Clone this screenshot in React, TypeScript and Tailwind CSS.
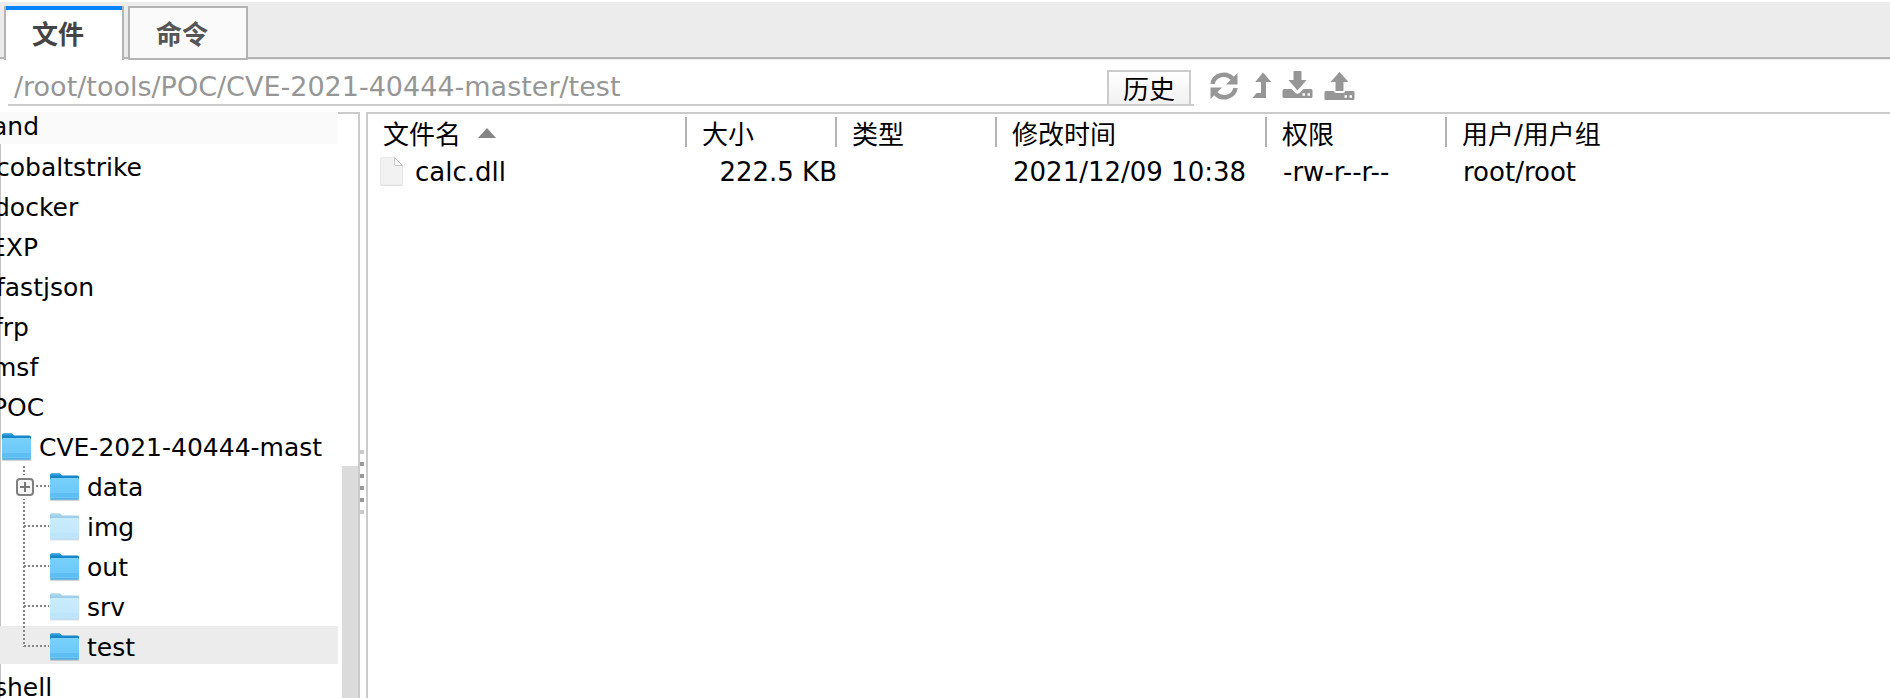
import React from 'react';
import clsx from 'clsx';

interface TreeNode {
    name: string;
    // 'clipped' rows are scrolled partly out of view on the left
    kind: 'clipped' | 'parent' | 'child';
    pull?: string;
    faded?: boolean;
    expandable?: boolean;
    selected?: boolean;
    last?: boolean;
}

const nodes: TreeNode[] = [
    { name: 'cobaltstrike', kind: 'clipped', pull: '-ml-1' },
    { name: 'docker', kind: 'clipped', pull: '-ml-1.5' },
    { name: 'EXP', kind: 'clipped', pull: '-ml-2.5' },
    { name: 'fastjson', kind: 'clipped', pull: '-ml-1' },
    { name: 'frp', kind: 'clipped', pull: '-ml-1.5' },
    { name: 'msf', kind: 'clipped', pull: '-ml-2' },
    { name: 'POC', kind: 'clipped', pull: '-ml-2' },
    { name: 'CVE-2021-40444-mast', kind: 'parent' },
    { name: 'data', kind: 'child', expandable: true },
    { name: 'img', kind: 'child', faded: true },
    { name: 'out', kind: 'child' },
    { name: 'srv', kind: 'child', faded: true },
    { name: 'test', kind: 'child', selected: true, last: true },
    { name: 'shell', kind: 'clipped', pull: '-ml-1.5' },
];

function FolderIcon({ faded }: { faded?: boolean }) {
    return (
        <svg width="30" height="28" viewBox="0 0 30 28" className={clsx('mt-1 shrink-0', faded && 'opacity-40')}>
            <defs>
                <linearGradient id="folderFront" x1="0" y1="0" x2="0" y2="1">
                    <stop offset="0" stopColor="#78d0fb" />
                    <stop offset="1" stopColor="#6ac6f8" />
                </linearGradient>
            </defs>
            <path d="M1 26.5h29v1.2H1z" fill="#8d9aa3" opacity="0.6" />
            <path d="M1 2q0-1.500 1.500-1.500h7.500q1 0 2 1l1.200 1h15.300q1.500 0 1.500 1.500V8H1z" fill="#1586c8" />
            <path d="M1 2q0-1.500 1.500-1.500h7.500q1 0 2 1l1.200 1H1z" fill="#2f9fd9" />
            <path d="M1 6.500q0-1.500 1.500-1.500h26q1.500 0 1.500 1.500V25q0 1.500-1.500 1.500h-26Q1 26.500 1 25z" fill="url(#folderFront)" />
            <path d="M1 21h29M1 23h29" stroke="#4dafe8" strokeWidth="0.8" />
            <path d="M1.500 26h28" stroke="#3f9bd4" />
        </svg>
    );
}

function FileIcon() {
    return (
        <svg width="26" height="32" viewBox="0 0 26 32" className="shrink-0">
            <path d="M3 2h13l8 8v18q0 2-2 2H3q-2 0-2-2V4q0-2 2-2z" fill="#c9c9c9" opacity="0.6" />
            <path d="M3 1.500h12l8.500 8.500v17q0 2-2 2H3.500q-2 0-2-2V3.500q0-2 1.500-2z" fill="#f2f2f2" stroke="#e2e2e2" strokeWidth="0.8" />
            <path d="M15.500 1.500v6.500q0 1.500 1.500 1.500h6.500z" fill="#fff" stroke="#bdbdbd" strokeWidth="0.9" />
        </svg>
    );
}

function Connector({ expandable, last }: { expandable?: boolean; last?: boolean }) {
    return (
        <svg width="49" height="40" viewBox="0 0 49 40" className="shrink-0">
            <path d={last ? 'M24 0v21' : 'M24 0v40'} stroke="#858585" strokeWidth="2" strokeDasharray="2 2" />
            <path d="M24 20h25" stroke="#858585" strokeWidth="2" strokeDasharray="2 2" />
            {expandable && (
                <>
                    <rect x="15" y="9" width="20" height="24" fill="#fff" />
                    <rect x="17" y="13" width="16" height="16" rx="3" fill="#f6f6f6" stroke="#808080" strokeWidth="2" />
                    <path d="M20 21h10M25 16v10" stroke="#777" strokeWidth="2" />
                </>
            )}
        </svg>
    );
}

function TreeRow({ node }: { node: TreeNode }) {
    return (
        <li className={clsx('mb-0.5 flex h-[38px] items-center whitespace-nowrap', node.selected && 'bg-[#ececec]')}>
            {node.kind === 'parent' && <span className="w-px shrink-0" />}
            {node.kind === 'child' && (
                <span className="-mb-0.5 shrink-0">
                    <Connector expandable={node.expandable} last={node.last} />
                </span>
            )}
            {node.kind !== 'clipped' && <FolderIcon faded={node.faded} />}
            <span className={clsx('mt-1.5', node.kind === 'clipped' ? node.pull : 'ml-2')}>{node.name}</span>
        </li>
    );
}

function Toolbar() {
    return (
        <div className="flex items-start text-[#969696]">
            <button aria-label="刷新" className="mt-0.5 ml-4">
                <svg width="28" height="28" viewBox="0 0 28 28" fill="none">
                    <path d="M2.500 12A11.500 11 0 0 1 22.500 6.500" stroke="currentColor" strokeWidth="4.500" />
                    <path d="M27.500 1v11.500H16z" fill="currentColor" />
                    <path d="M25.500 16A11.500 11 0 0 1 5.500 21.500" stroke="currentColor" strokeWidth="4.500" />
                    <path d="M0.500 27V15.500H12z" fill="currentColor" />
                </svg>
            </button>
            <button aria-label="上级目录" className="mt-0.5 ml-3.5">
                <svg width="20" height="28" viewBox="0 0 20 28" fill="currentColor">
                    <path d="M11 0.500 19.300 10H14v16H0.500l4-5H9V10H3.200z" />
                </svg>
            </button>
            <button aria-label="下载" className="ml-2.5">
                <svg width="31" height="30" viewBox="0 0 31 30" fill="currentColor">
                    <path d="M12 1h7q.5 0 .5.500V10h5L15.500 20.500 6.500 10h5V1.500q0-.5.500-.500z" />
                    <path
                        fillRule="evenodd"
                        d="M2 19h7.500l4 4q2 1.500 4 0l4-4H29q1.500 0 1.500 1.500v6q0 1.500-1.500 1.500H2Q.5 28 .5 26.500v-6Q.5 19 2 19zM20.500 23.200v2.500H23v-2.500zM25.500 23.200v2.500H28v-2.500z"
                    />
                </svg>
            </button>
            <button aria-label="上传" className="mt-0.5 ml-[11px]">
                <svg width="31" height="30" viewBox="0 0 31 30" fill="currentColor">
                    <path d="M15.500 0 24.500 10h-5v8.500q0 .5-.5.500h-7q-.5 0-.5-.500V10h-5z" />
                    <path
                        fillRule="evenodd"
                        d="M2 19h8q0 2 2 2h7q2 0 2-2h8q1.500 0 1.500 1.500v6q0 1.500-1.500 1.500H2Q.5 28 .5 26.500v-6Q.5 19 2 19zM20.500 23.200v2.500H23v-2.500zM25.500 23.200v2.500H28v-2.500z"
                    />
                </svg>
            </button>
        </div>
    );
}

const columns = [
    { label: '文件名', width: 'w-[319px]', sorted: true },
    { label: '大小', width: 'w-[150px]' },
    { label: '类型', width: 'w-[160px]' },
    { label: '修改时间', width: 'w-[270px]' },
    { label: '权限', width: 'w-[180px]' },
    { label: '用户/用户组', width: 'w-auto' },
];

export default function App() {
    return (
        <div className="flex h-screen flex-col overflow-hidden bg-white font-['DejaVu_Sans','Noto_Sans_CJK_SC',sans-serif] text-[26px] leading-8 text-black">
            {/* Tabs */}
            <div role="tablist" className="mt-0.5 flex h-[58px] shrink-0 items-stretch gap-1 border-b border-[#eee] bg-[#ececec] pt-1 font-bold shadow-[inset_0_-2px_0_#b4b4b4]">
                <button role="tab" aria-selected="true" className="-mb-px ml-1 w-[120px] border-x-2 border-[#b4b4b4] bg-white pt-1 pr-3 shadow-[inset_0_4px_0_#0a84ff] text-[#444]">
                    文件
                </button>
                <button role="tab" aria-selected="false" className="-mb-px w-[120px] border-2 border-[#b4b4b4] bg-[#fafafa] pt-1 pr-3 text-[#555]">
                    命令
                </button>
            </div>

            {/* Path bar */}
            <div className="flex h-[52px] shrink-0 items-start pt-2.5">
                <div className="ml-2 flex h-9 w-[1186px] items-stretch border-b-2 border-[#cbcbcb]">
                    <input
                        aria-label="路径"
                        defaultValue="/root/tools/POC/CVE-2021-40444-master/test"
                        className="min-w-0 flex-1 bg-transparent pl-1.5 text-[27px] text-[#969696] outline-none"
                    />
                    <button className="mr-[3px] w-[84px] border-2 border-b-0 border-[#cbcbcb] bg-linear-to-b from-white to-[#f1f1f1] pt-0.5">历史</button>
                </div>
                <Toolbar />
            </div>

            <div className="flex min-h-0 flex-1">
                {/* Directory tree */}
                <aside className="flex w-[360px] shrink-0 border-r-2 border-[#cbcbcb] text-[25px]">
                    <ul className="w-[338px] overflow-hidden bg-linear-to-r from-[#c4c4c4] from-[1px] to-white to-[1px]">
                        <li className="mb-0.5 flex h-8 items-center bg-[#fafafa]">
                            <span className="-mt-0.5 -ml-2">and</span>
                        </li>
                        {nodes.map((node) => (
                            <TreeRow key={node.name} node={node} />
                        ))}
                    </ul>
                    <div className="flex flex-1 flex-col border-t-2 border-[#cbcbcb] pl-1">
                        <div className="mt-[352px] flex-1 bg-[#dbdbdb]" />
                    </div>
                </aside>

                {/* Splitter grip */}
                <div className="flex w-1.5 shrink-0 flex-col gap-2 pt-[338px]">
                    <span className="h-1 w-1 bg-[#c9c9c9]" />
                    <span className="h-1 w-1 bg-[#999]" />
                    <span className="h-1 w-1 bg-[#999]" />
                    <span className="h-1 w-1 bg-[#999]" />
                    <span className="h-1 w-1 bg-[#999]" />
                    <span className="h-1 w-1 bg-[#c9c9c9]" />
                </div>

                {/* File list */}
                <main className="min-w-0 flex-1 border-t-2 border-l-2 border-[#cbcbcb]">
                    <table className="w-full table-fixed border-collapse text-left whitespace-nowrap">
                        <thead>
                            <tr>
                                {columns.map((col, i) => (
                                    <th key={col.label} scope="col" className={clsx('p-0 pt-[3px] font-normal', col.width)}>
                                        <div className={clsx('flex h-[30px] items-center pt-1.5 pl-[15px]', i < columns.length - 1 && 'border-r-2 border-[#b4b4b4]')}>
                                            {col.label}
                                            {col.sorted && (
                                                <svg width="18" height="10" viewBox="0 0 18 10" className="-mt-1 ml-[17px]">
                                                    <path d="M9 0 18 10H0z" fill="#858585" />
                                                </svg>
                                            )}
                                        </div>
                                    </th>
                                ))}
                            </tr>
                        </thead>
                        <tbody>
                            <tr className="h-[50px]">
                                <td className="p-0">
                                    <div className="flex items-center gap-2.5 pl-[11px]">
                                        <FileIcon />
                                        calc.dll
                                    </div>
                                </td>
                                <td className="p-0 text-right">222.5 KB</td>
                                <td className="p-0" />
                                <td className="p-0 pl-4">2021/12/09 10:38</td>
                                <td className="p-0 pl-4">-rw-r--r--</td>
                                <td className="p-0 pl-4">root/root</td>
                            </tr>
                        </tbody>
                    </table>
                </main>
            </div>
        </div>
    );
}
